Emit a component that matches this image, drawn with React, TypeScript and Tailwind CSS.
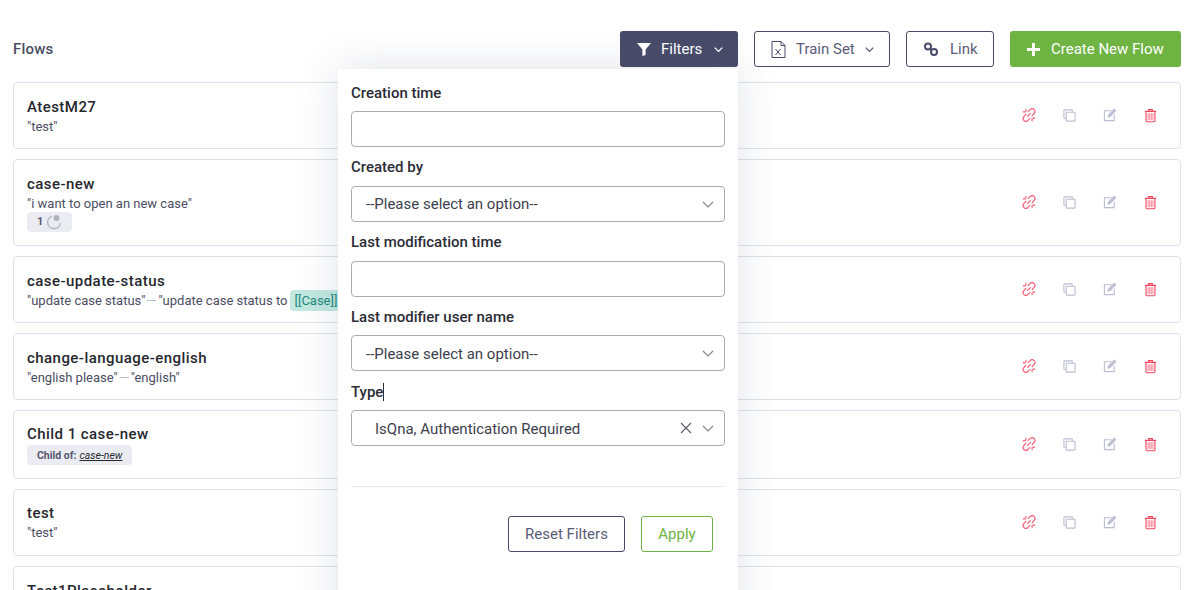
const font = { fontFamily: "Roboto, sans-serif" };

function UnlinkIcon() {
  return (
    <svg width="14" height="14" viewBox="0 0 16 16" fill="none" stroke="#f4566f" strokeWidth="1.3" strokeLinecap="round">
      <path d="M7 3.8 9.2 1.9a3.1 3.1 0 0 1 4.7 4.2L11.6 8.6" />
      <path d="M9 12.2 6.8 14.1a3.1 3.1 0 0 1-4.7-4.2L4.4 7.4" />
      <path d="M6.4 9.6 9.6 6.4" />
      <path d="M1.5 4.5h2M4.5 1.5v2M14.5 11.5h-2M11.5 14.5v-2" />
    </svg>
  );
}

function CopyIcon() {
  return (
    <svg width="13" height="13" viewBox="0 0 14 14" fill="none" stroke="#bcbed3" strokeWidth="1.2">
      <path d="M3.5 10H1.5a.5.5 0 0 1-.5-.5V1.5a.5.5 0 0 1 .5-.5h8a.5.5 0 0 1 .5.5V3.5" />
      <rect x="3.5" y="3.5" width="9.5" height="9.5" rx=".5" />
    </svg>
  );
}

function EditIcon() {
  return (
    <svg width="14" height="14" viewBox="0 0 15 15" fill="none" stroke="#bcbed3" strokeWidth="1.2">
      <path d="M9 3H1.5v10.5H12V7" />
      <path d="M5.5 9.5 6 7.5 12 1.5l1.5 1.5-6 6z" fill="#bcbed3" />
    </svg>
  );
}

function TrashIcon() {
  return (
    <svg width="13" height="15" viewBox="0 0 14 15" fill="none" stroke="#f4465f" strokeWidth="1.2">
      <path d="M1 3h12M5 3V1.2h4V3" />
      <path d="M2.2 3v10.2a1 1 0 0 0 1 1h7.6a1 1 0 0 0 1-1V3" />
      <path d="M4.4 5v7.5M6.2 5v7.5M7.8 5v7.5M9.6 5v7.5" strokeWidth="1" stroke="#f9798c" />
    </svg>
  );
}

function Chevron({ className = "", bold }: { className?: string; bold?: boolean }) {
  return (
    <svg className={className} width="12" height="7" viewBox="0 0 12 7" fill="none" stroke="currentColor" strokeWidth={bold ? 1.8 : 1.2}>
      <path d="M1 1l5 5 5-5" />
    </svg>
  );
}

function Quotes({ items, raise }: { items: string[]; raise?: boolean }) {
  return (
    <div className={`h-[18px] flex items-center text-[13px] leading-[18px] text-[#4b4d63] whitespace-nowrap ${raise ? "" : "pt-px"}`}>
      {items.map((item, i) => (
        <span key={i} className="flex items-center">
          {i > 0 && <span className="mx-[2px] w-[9px] h-px bg-[#b9bbcb]"></span>}
          {item}
        </span>
      ))}
    </div>
  );
}

function FlowCard({ title, raise, children }: any) {
  return (
    <div className="flex justify-between items-center rounded border border-[#e0e1ec] pl-[13px] pr-[23px] pt-[14px] pb-[13px] bg-white">
      <div className="min-w-0">
        <div className={`h-5 leading-5 text-[15px] font-medium text-[#26272f] tracking-[0.45px] ${raise ? "-translate-y-px" : ""}`}>{title}</div>
        {children}
      </div>
      <div className="flex items-center gap-[27px] -mt-0.5">
        <UnlinkIcon />
        <CopyIcon />
        <EditIcon />
        <TrashIcon />
      </div>
    </div>
  );
}

function Field({ label, cursor, raise, children, className = "" }: any) {
  return (
    <div className={className}>
      <div className={`h-5 mb-2 leading-5 text-[15px] font-medium text-[#2b2c36] flex items-center ${raise ? "-translate-y-px" : ""}`}>
        {label}
        {cursor && <span className="w-px h-[18px] bg-[#2b2c36]"></span>}
      </div>
      {children}
    </div>
  );
}

function TextInput() {
  return <div className="h-9 rounded border border-[#a9abb5] bg-white"></div>;
}

function SelectBox({ value = "--Please select an option--", clear, down }: any) {
  return (
    <div className={`h-9 rounded border border-[#a9abb5] bg-white flex items-center pr-[10px] text-[15px] text-[#3d3e4d] ${clear ? "pl-[23px]" : "pl-[14px]"}`}>
      <span className={`flex-1 ${down ? "pt-0.5" : ""}`}>{value}</span>
      {clear && (
        <svg className="mr-[10px]" width="12" height="12" viewBox="0 0 12 12" stroke="#60616f" strokeWidth="1.2">
          <path d="M1 1l10 10M11 1 1 11" />
        </svg>
      )}
      <Chevron className="text-[#85868f]" />
    </div>
  );
}

export default function App() {
  return (
    <div style={font} className="relative h-[590px] overflow-hidden bg-white pl-[13px] pr-2 pt-[31px]">
      <div className="relative z-20 flex items-center h-9 mb-[15px]">
        <div className="flex-1 text-[15px] font-medium text-[#4b4d63] tracking-[0.2px]">Flows</div>
        <button className="flex items-center h-9 w-[118px] pl-[17px] rounded-[3px] bg-[#474a68] text-white text-[15px]">
          <svg width="14" height="14" viewBox="0 0 14 14" fill="white">
            <path d="M0 1h14L8.6 7.4V13L5.4 14V7.4z" />
          </svg>
          <span className="ml-[10px]">Filters</span>
          <Chevron bold className="ml-[12px] w-[9px]" />
        </button>
        <button className="ml-4 flex items-center h-9 w-[136px] pl-4 rounded-[3px] border border-[#474a68] bg-white text-[#5b5d78] text-[15px]">
          <svg width="15" height="17" viewBox="0 0 15 17" fill="none" stroke="#474a68" strokeWidth="1">
            <path d="M1 .5h9l4 4v12H1z" />
            <path d="M10 .5v4h4" />
            <path d="M4.5 8l5 6M9.5 8l-5 6" />
          </svg>
          <span className="ml-[10px]">Train Set</span>
          <Chevron bold className="ml-[10px] w-[9px]" />
        </button>
        <button className="ml-4 flex items-center h-9 w-[88px] pl-4 rounded-[3px] border border-[#474a68] bg-white text-[#5b5d78] text-[15px]">
          <svg width="16" height="16" viewBox="0 0 16 16" fill="none" stroke="#474a68" strokeWidth="2">
            <circle cx="5" cy="5.5" r="3" />
            <circle cx="11" cy="11" r="3" />
            <path d="M7 7.5l2 1.5" />
          </svg>
          <span className="ml-[11px]">Link</span>
        </button>
        <button className="ml-4 flex items-center h-9 w-[171px] pl-[17px] rounded-[3px] bg-[#6fb342] text-white text-[15px]">
          <svg width="13" height="13" viewBox="0 0 13 13" fill="white">
            <path d="M5 0h3v5h5v3H8v5H5V8H0V5h5z" />
          </svg>
          <span className="ml-[11px]">Create New Flow</span>
        </button>
      </div>

      <div className="flex flex-col gap-[10px]">
        <FlowCard title="AtestM27">
          <Quotes items={['"test"']} />
        </FlowCard>
        <FlowCard title="case-new">
          <Quotes items={['"i want to open an new case"']} />
          <div className="flex items-center gap-[3px] h-5 w-[45px] pl-[10px] rounded bg-[#ebecf2] text-[11px] font-bold text-[#555770]">
            1
            <svg width="16" height="16" viewBox="0 0 16 16" fill="none">
              <path d="M6 2.2A6.4 6.4 0 1 0 14.4 9" stroke="#b9bac6" strokeWidth="1.6" />
              <circle cx="10.5" cy="4" r="3" fill="#b0b1bf" />
            </svg>
          </div>
        </FlowCard>
        <FlowCard title="case-update-status">
          <div className="h-[18px] pt-px flex items-center text-[13px] leading-[18px] text-[#4b4d63] whitespace-nowrap">
            "update case status"
            <span className="mx-[2px] w-[9px] h-px bg-[#b9bbcb]"></span>
            "update case status to
            <span className="ml-[3px] px-1 h-[21px] leading-[21px] rounded bg-[#c2e8e0] text-[#1b8a7c]">[[Case]]</span>
            "
          </div>
        </FlowCard>
        <FlowCard title="change-language-english">
          <Quotes items={['"english please"', '"english"']} />
        </FlowCard>
        <FlowCard title="Child 1 case-new" raise>
          <div className="flex items-center h-5 w-[105px] pl-[10px] pt-px rounded bg-[#ebecf2] text-[10.5px] font-bold text-[#555770]">
            Child of:
            <span className="ml-[3px] italic font-normal underline text-[#26272f]">case-new</span>
          </div>
        </FlowCard>
        <FlowCard title="test" raise>
          <Quotes items={['"test"']} raise />
        </FlowCard>
        <FlowCard title="Test1Placeholder">
          <Quotes items={['"test"']} />
        </FlowCard>
      </div>

      <div className="absolute z-10 left-[338px] top-[69px] w-[400px] h-[560px] bg-white px-[13px] pt-[14px] shadow-[0_0_40px_rgba(71,74,104,0.16)]">
        <div className="flex flex-col gap-[11px]">
          <Field label="Creation time">
            <TextInput />
          </Field>
          <Field label="Created by" raise>
            <SelectBox />
          </Field>
          <Field label="Last modification time" raise>
            <TextInput />
          </Field>
          <Field label="Last modifier user name" className="-mt-px">
            <SelectBox down />
          </Field>
          <Field label="Type" cursor>
            <SelectBox value="IsQna, Authentication Required" clear down />
          </Field>
        </div>
        <div className="mt-10 pt-[29px] border-t border-[#e8e8ee] flex justify-end gap-4 pr-3">
          <button className="h-9 w-[117px] rounded-[3px] border border-[#474a68] text-[15px] text-[#5b5d78]">Reset Filters</button>
          <button className="h-9 w-[72px] rounded-[3px] border border-[#6fb342] text-[15px] text-[#6fb342]">Apply</button>
        </div>
      </div>
    </div>
  );
}
